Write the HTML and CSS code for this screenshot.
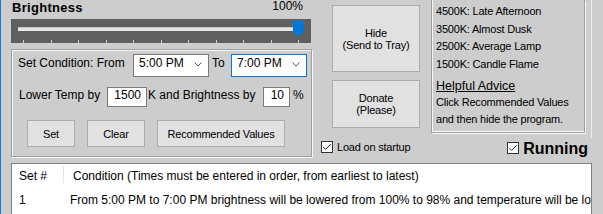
FILE: index.html
```html
<!DOCTYPE html>
<html>
<head>
<meta charset="utf-8">
<link rel="stylesheet" href="styles.css">
</head>
<body>
<div class="win">
  <div class="top">
    <div class="left">
      <div class="bhead"><span class="btitle">Brightness</span><span class="bval">100%</span></div>
      <div class="slider">
        <div class="track"></div>
        <svg class="thumb" width="11" height="16" viewBox="0 0 11 16"><polygon points="0,0 11,0 11,11 5.5,16 0,11" fill="#0078d7"/></svg>
        <div class="ticks"><i></i><i></i><i></i><i></i><i></i><i></i><i></i><i></i><i></i><i></i><i></i></div>
      </div>
      <div class="group">
        <div class="row r1">
          <span class="lbl lbl-from">Set Condition: From</span>
          <div class="combo"><span>5:00 PM</span><svg class="chev" width="8" height="5" viewBox="0 0 8 5"><polyline points="0.5,0.5 4,4 7.5,0.5" fill="none" stroke="#555" stroke-width="1"/></svg></div>
          <span class="lbl to">To</span>
          <div class="combo focus"><span>7:00 PM</span><svg class="chev" width="8" height="5" viewBox="0 0 8 5"><polyline points="0.5,0.5 4,4 7.5,0.5" fill="none" stroke="#555" stroke-width="1"/></svg></div>
        </div>
        <div class="row r2">
          <span class="lbl lbl-lower">Lower Temp by</span>
          <div class="num n1">1500</div>
          <span class="lbl lbl-k">K and Brightness by</span>
          <div class="num n2">10</div>
          <span class="lbl pct">%</span>
        </div>
        <div class="row r3">
          <button class="btn b-set">Set</button>
          <button class="btn b-clear">Clear</button>
          <button class="btn b-rec">Recommended Values</button>
        </div>
      </div>
    </div>
    <div class="mid">
      <button class="btn big hide">Hide<br>(Send to Tray)</button>
      <button class="btn big donate">Donate<br>(Please)</button>
      <div class="chk">
        <svg width="12" height="12" viewBox="0 0 12 12"><rect x="0.5" y="0.5" width="11" height="11" fill="#fff" stroke="#333"/><polyline points="2.2,6 4.6,8.4 9.8,3.2" fill="none" stroke="#222" stroke-width="1"/></svg>
        <span>Load on startup</span>
      </div>
    </div>
    <div class="infocol">
      <div class="info">
        <div class="il">4500K: Late Afternoon</div>
        <div class="il">3500K: Almost Dusk</div>
        <div class="il">2500K: Average Lamp</div>
        <div class="il">1500K: Candle Flame</div>
        <div class="adv-h">Helpful Advice</div>
        <div class="il adv">Click Recommended Values</div>
        <div class="il adv">and then hide the program.</div>
      </div>
      <div class="running">
        <svg width="12" height="12" viewBox="0 0 12 12"><rect x="0.5" y="0.5" width="11" height="11" fill="#fff" stroke="#333"/><polyline points="2.2,6 4.6,8.4 9.8,3.2" fill="none" stroke="#222" stroke-width="1"/></svg>
        <span>Running</span>
      </div>
    </div>
    <div class="edge"></div>
  </div>
  <div class="list">
    <div class="lh">
      <div class="c1">Set #</div>
      <div class="sep"></div>
      <div class="c2">Condition (Times must be entered in order, from earliest to latest)</div>
    </div>
    <div class="lr">
      <div class="c1">1</div>
      <div class="c2">From 5:00 PM to 7:00 PM brightness will be lowered from 100% to 98% and temperature will be lowered</div>
    </div>
  </div>
</div>
</body>
</html>
```
FILE: styles.css
```css
body {
  margin: 0;
}

.win {
  width: 603px;
  height: 214px;
  box-sizing: border-box;
  border-left: 1px solid #1979d4;
  background: #cdcdcd;
  overflow: hidden;
  font-family: "Liberation Sans", Arial, sans-serif;
  font-size: 12px;
  color: #000;
}

.top {
  display: flex;
  align-items: flex-start;
  height: 163px;
}

.left {
  margin-left: 10px;
  width: 301px;
}

.bhead {
  height: 19px;
  display: flex;
  justify-content: space-between;
  align-items: flex-start;
  padding: 0 9px 0 1px;
}

.btitle {
  font-weight: bold;
  font-size: 13px;
  letter-spacing: 0.3px;
  line-height: 15px;
}

.bval {
  font-size: 12px;
  line-height: 13px;
}

.slider {
  position: relative;
  width: 300px;
  height: 24px;
  box-sizing: border-box;
  background: #606060;
  padding-top: 8px;
}

.track {
  margin-left: 7px;
  width: 285px;
  height: 4px;
  background: #e6e6e6;
  box-shadow: inset 0 1px 0 #c4c4c4;
}

.thumb {
  position: absolute;
  left: 282px;
  top: 2px;
}

.ticks {
  display: flex;
  justify-content: space-between;
  margin: 9px 12px 0;
  height: 3px;
}

.ticks i {
  width: 1px;
  background: #d4d4d4;
}

.group {
  margin-top: 6px;
  height: 108px;
  box-sizing: border-box;
  border: 1px solid #a0a0a0;
  box-shadow: inset 1px 1px 0 #f6f6f6, 1px 1px 0 #f6f6f6;
}

.row {
  display: flex;
  align-items: flex-start;
}

.r1 {
  margin-top: 4px;
  height: 23px;
  padding-left: 6px;
}

.r1 .lbl {
  line-height: 19px;
}

.lbl-from {
  width: 115px;
}

.combo {
  width: 76px;
  height: 23px;
  box-sizing: border-box;
  border: 1px solid #7a7a7a;
  background: #fff;
  display: flex;
  align-items: flex-start;
  justify-content: space-between;
  padding: 0 6px 0 5px;
  line-height: 17px;
}

.combo.focus {
  border-color: #0078d7;
}

.chev {
  margin-top: 7px;
}

.to {
  margin-left: 3px;
  width: 19px;
}

.r2 {
  margin-top: 10px;
  height: 20px;
  padding-left: 7px;
}

.r2 .lbl {
  line-height: 16px;
}

.lbl-lower {
  width: 88px;
}

.num {
  height: 20px;
  box-sizing: border-box;
  border: 1px solid #7a7a7a;
  background: #fff;
  text-align: right;
  padding-right: 5px;
  line-height: 14px;
}

.n1 {
  width: 40px;
}

.n2 {
  width: 27px;
}

.lbl-k {
  margin-left: 1px;
  width: 115px;
}

.pct {
  margin-left: 3px;
}

.r3 {
  margin-top: 13px;
  height: 27px;
  padding-left: 15px;
}

.btn {
  box-sizing: border-box;
  margin: 0;
  padding: 0;
  background: #e1e1e1;
  border: 1px solid #adadad;
  border-radius: 0;
  font-family: "Liberation Sans", Arial, sans-serif;
  font-size: 11px;
  letter-spacing: -0.2px;
  line-height: 12px;
  color: #000;
  display: flex;
  align-items: center;
  justify-content: center;
  text-align: center;
}

.b-set {
  width: 48px;
  height: 27px;
}

.b-clear {
  margin-left: 12px;
  width: 58px;
  height: 27px;
}

.b-rec {
  margin-left: 12px;
  width: 128px;
  height: 27px;
}

.mid {
  margin-left: 9px;
  width: 99px;
}

.big {
  margin-left: 11px;
  width: 88px;
}

.hide {
  margin-top: 5px;
  height: 67px;
}

.donate {
  margin-top: 8px;
  height: 48px;
}

.chk {
  display: flex;
  align-items: center;
  margin-top: 13px;
  font-size: 11px;
  letter-spacing: -0.2px;
  white-space: nowrap;
}

.chk svg {
  margin-right: 4px;
  flex: none;
}

.infocol {
  margin-left: 11px;
  width: 154px;
}

.info {
  height: 133px;
  box-sizing: border-box;
  border: 1px solid #a0a0a0;
  border-top: 0;
  box-shadow: inset 1px -1px 0 #f6f6f6, 1px 1px 0 #f6f6f6;
  padding: 3px 0 0 4px;
}

.il {
  font-size: 11px;
  letter-spacing: -0.2px;
  line-height: 17.7px;
  white-space: nowrap;
}

.adv-h {
  font-size: 12.5px;
  line-height: 16px;
  margin-top: 4px;
  text-decoration: underline;
  white-space: nowrap;
}

.il.adv {
  line-height: 17.4px;
}

.running {
  display: flex;
  align-items: flex-start;
  justify-content: flex-end;
  margin: 8px -3px 0 0;
  font-weight: bold;
  font-size: 16px;
  line-height: 16px;
}

.running svg {
  margin: 1px 4px 0 0;
  flex: none;
}

.edge {
  margin-left: 6px;
  width: 1px;
  height: 138px;
  background: #ececec;
}

.list {
  margin-left: 10px;
  width: 581px;
  height: 60px;
  box-sizing: border-box;
  border: 1px solid #828282;
  background: #fff;
  overflow: hidden;
  white-space: nowrap;
}

.lh {
  display: flex;
  height: 23px;
  padding-top: 4px;
  box-sizing: border-box;
  line-height: 16px;
}

.lh .c1 {
  width: 51px;
  padding-left: 7px;
  box-sizing: border-box;
  flex: none;
}

.sep {
  width: 1px;
  height: 17px;
  margin-top: -2px;
  background: #e5e5e5;
  flex: none;
}

.lh .c2 {
  padding-left: 9px;
}

.lr {
  display: flex;
  padding-top: 5px;
  line-height: 16px;
}

.lr .c1 {
  width: 52px;
  padding-left: 7px;
  box-sizing: border-box;
  flex: none;
}

.lr .c2 {
  padding-left: 6px;
}
```
